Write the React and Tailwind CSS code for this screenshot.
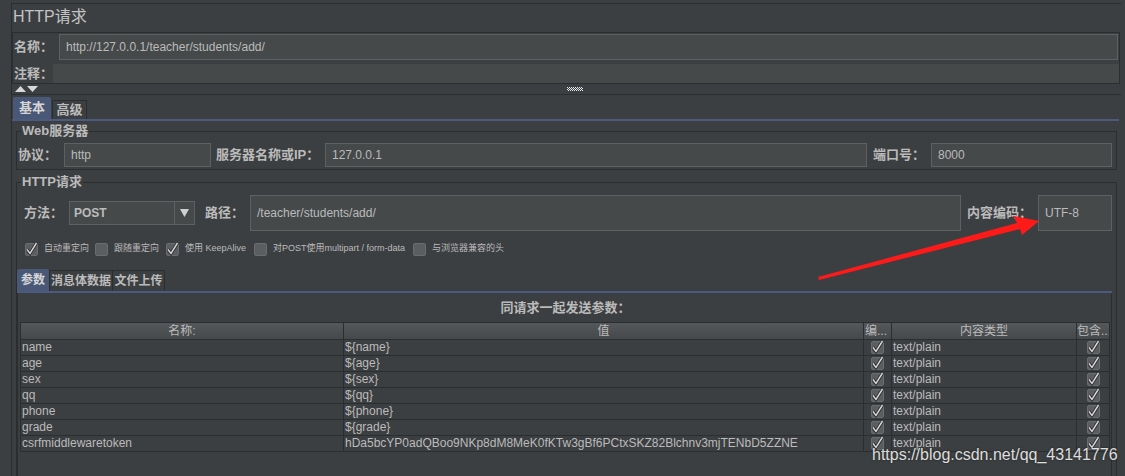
const font = "font-['Liberation_Sans','Noto_Sans_CJK_SC',sans-serif]";

function Check({ on }) {
  return (
    <span className="flex h-[13px] w-[13px] shrink-0 items-center justify-center rounded-[2px] border border-[#6a6d70] bg-[#5b5e60]">
      {on && (
        <svg width="13" height="13" viewBox="0 0 13 13" className="overflow-visible">
          <path d="M2 6.5 L5 10.5 L11.5 0" fill="none" stroke="#222" strokeWidth="3" />
          <path d="M2 6.5 L5 10.5 L11.5 0" fill="none" stroke="#d4d4d4" strokeWidth="1.5" />
        </svg>
      )}
    </span>
  );
}

function Field({ w, h = "h-[24px]", children }) {
  return (
    <div className={`${w} ${h} flex items-center border border-[#5e6163] bg-[#45494a] pl-[6px] text-[12px]`}>
      {children}
    </div>
  );
}

const rows = [
  ["name", "${name}"],
  ["age", "${age}"],
  ["sex", "${sex}"],
  ["qq", "${qq}"],
  ["phone", "${phone}"],
  ["grade", "${grade}"],
  ["csrfmiddlewaretoken", "hDa5bcYP0adQBoo9NKp8dM8MeK0fKTw3gBf6PCtxSKZ82Blchnv3mjTENbD5ZZNE"],
];

const opts = [
  ["w-[70px]", true, "自动重定向"],
  ["w-[71px]", false, "跟随重定向"],
  ["w-[88px]", true, "使用 KeepAlive"],
  ["w-[159px]", false, "对POST使用multipart / form-data"],
  ["w-[100px]", false, "与浏览器兼容的头"],
];

export default function App() {
  return (
    <div className={`relative h-[476px] w-[1125px] overflow-hidden bg-[#3c3f41] text-[#bbbbbb] ${font}`}>
      <div className="ml-[11px] mt-[3px] h-[473px] w-[1110px] border-l border-t border-[#2b2d2f]">
        {/* 标题 */}
        <div className="h-[28px] pl-[1px] pt-[3px] text-[16px] leading-[20px] text-[#c4c4c4]">HTTP请求</div>

        {/* 名称 / 注释 */}
        <div className="h-[52px] w-[1108px] border border-[#2b2d2f] pt-[1px]">
          <div className="flex h-[26px] items-center">
            <span className="w-[46px] pl-[1px] text-[13px] font-bold">名称：</span>
            <div className="flex h-[26px] w-[1059px] items-center border border-[#5e6163] bg-[#45494a] pl-[6px] text-[12px]">
              http://127.0.0.1/teacher/students/add/
            </div>
          </div>
          <div className="mt-[4px] flex h-[19px] items-center">
            <span className="w-[40px] pl-[1px] text-[13px] font-bold">注释：</span>
            <div className="h-[19px] flex-1 bg-[#45494a]" />
          </div>
        </div>

        {/* 分隔条 */}
        <div className="flex h-[11px] items-center border-b border-[#2b2d2f] pl-[3px]">
          <svg width="23" height="6" viewBox="0 0 23 6">
            <path d="M0 6 L5.5 0 L11 6 Z" fill="#d8d8d8" />
            <path d="M12 0 L23 0 L17.5 6 Z" fill="#d8d8d8" />
          </svg>
          <svg width="16" height="4" viewBox="0 0 16 4" className="ml-[529px]">
            {[0, 1, 2, 3].map((y) =>
              [0, 2, 4, 6, 8, 10, 12, 14].map((x) => (
                <rect key={`${x}-${y}`} x={x + (y % 2)} y={y} width="1" height="1" fill="#e6e6e6" />
              ))
            )}
          </svg>
        </div>

        {/* 基本 / 高级 */}
        <div className="mt-[2px] flex h-[22px] items-end pl-[1px] text-[13px] font-bold">
          <div className="flex h-[22px] w-[38px] items-center justify-center rounded-t-[2px] bg-[#4a5877] text-[#d6d6d6]">基本</div>
          <div className="ml-[1px] flex h-[19px] w-[35px] items-center justify-center border border-b-0 border-[#2b2d2f]">高级</div>
        </div>
        <div className="h-[2px] w-[1107px] bg-[#4b5a7e]" />

        {/* Web服务器 */}
        <fieldset className="ml-[4px] mt-[3px] w-[1101px] border border-[#2b2d2f] p-0 pb-[2px]">
          <legend className="ml-[4px] px-[1px] text-[13px] font-bold leading-[14px]">Web服务器</legend>
          <div className="mt-[5px] flex h-[24px] items-center text-[13px] font-bold">
            <span className="w-[47px] pl-[1px]">协议：</span>
            <Field w="w-[147px]"><span className="font-normal">http</span></Field>
            <span className="w-[114px] pl-[5px]">服务器名称或IP：</span>
            <Field w="w-[542px]"><span className="font-normal">127.0.0.1</span></Field>
            <span className="w-[64px] pl-[6px]">端口号：</span>
            <Field w="w-[181px]"><span className="font-normal">8000</span></Field>
          </div>
        </fieldset>

        {/* HTTP请求 */}
        <fieldset className="ml-[4px] mt-[5px] w-[1101px] border border-[#2b2d2f] p-0">
          <legend className="ml-[4px] px-[1px] text-[13px] font-bold leading-[14px]">HTTP请求</legend>
          <div className="mt-[6px] flex h-[36px] items-center text-[13px] font-bold">
            <span className="w-[52px] pl-[7px]">方法：</span>
            <div className="flex h-[24px] w-[126px] border border-[#5e6163] bg-[#45494a]">
              <span className="flex flex-1 items-center pl-[4px] text-[12px]">POST</span>
              <span className="flex w-[20px] items-center justify-center border-l border-[#5e6163]">
                <svg width="9" height="8" viewBox="0 0 9 8"><path d="M0 0 L9 0 L4.5 8 Z" fill="#d0d0d0" /></svg>
              </span>
            </div>
            <span className="w-[55px] pl-[10px]">路径：</span>
            <Field w="w-[711px]" h="h-[36px]"><span className="font-normal">/teacher/students/add/</span></Field>
            <span className="w-[77px] pl-[6px]">内容编码：</span>
            <Field w="w-[74px]" h="h-[36px]"><span className="font-normal">UTF-8</span></Field>
          </div>

          <div className="mt-[11px] flex h-[14px] items-center pl-[8px] text-[9px]">
            {opts.map(([w, on, label]) => (
              <div key={label} className={`${w} flex items-center gap-[6px]`}>
                <Check on={on} />
                <span className="whitespace-nowrap">{label}</span>
              </div>
            ))}
          </div>

          {/* 参数 / 消息体数据 / 文件上传 */}
          <div className="mt-[13px] flex h-[22px] items-end whitespace-nowrap text-[12px] font-bold">
            <div className="flex h-[22px] w-[32px] items-center justify-center rounded-t-[2px] bg-[#4a5877] text-[#d6d6d6]">参数</div>
            <div className="flex h-[21px] w-[64px] items-center justify-center border border-b-0 border-[#2b2d2f]">消息体数据</div>
            <div className="flex h-[21px] w-[52px] items-center justify-center border border-b-0 border-l-0 border-[#2b2d2f]">文件上传</div>
          </div>
          <div className="h-[2px] w-[1095px] bg-[#4b5a7e]" />

          <div className="h-[200px] w-[1095px] border-l border-r border-[#2b2d2f] pl-[2px]">
            <div className="flex h-[29px] items-center justify-center text-[13px] font-bold">同请求一起发送参数：</div>
            <div className="w-[1090px] border-l border-t border-[#2b2d2f] text-[12px]">
              <div className="grid h-[17px] grid-cols-[323px_520px_28px_185px_33px] bg-gradient-to-b from-[#55585b] to-[#45484a] text-[12px] leading-[16px]">
                <div className="border-b border-r border-[#2b2d2f] text-center">名称:</div>
                <div className="border-b border-r border-[#2b2d2f] text-center">值</div>
                <div className="overflow-hidden whitespace-nowrap border-b border-r border-[#2b2d2f] pl-[1px]">编...</div>
                <div className="border-b border-r border-[#2b2d2f] text-center">内容类型</div>
                <div className="overflow-hidden whitespace-nowrap border-b border-r border-[#2b2d2f]">包含...</div>
              </div>
              {rows.map(([k, v]) => (
                <div key={k} className="grid h-[16px] grid-cols-[323px_520px_28px_185px_33px] leading-[15px]">
                  <div className="border-b border-r border-[#2b2d2f] pl-[1px]">{k}</div>
                  <div className="whitespace-nowrap border-b border-r border-[#2b2d2f] pl-[1px]">{v}</div>
                  <div className="flex items-center justify-center border-b border-r border-[#2b2d2f]"><Check on /></div>
                  <div className="border-b border-r border-[#2b2d2f] pl-[1px]">text/plain</div>
                  <div className="flex items-center justify-center border-b border-r border-[#2b2d2f]"><Check on /></div>
                </div>
              ))}
            </div>
          </div>
        </fieldset>
      </div>

      {/* 红色箭头 */}
      <svg className="absolute left-0 top-0" width="1125" height="476" viewBox="0 0 1125 476">
        <path d="M818 277 L1017 223 L1013 216 L1039 221 L1022 235 L1020 229 L819 280 Z" fill="#ff1a1a" />
      </svg>

      {/* 水印 */}
      <div className="absolute left-[872px] top-[445px] text-[16px] leading-[20px] text-white/85 [text-shadow:0_0_2px_rgba(0,0,0,0.7)]">
        https://blog.csdn.net/qq_43141776
      </div>
    </div>
  );
}
